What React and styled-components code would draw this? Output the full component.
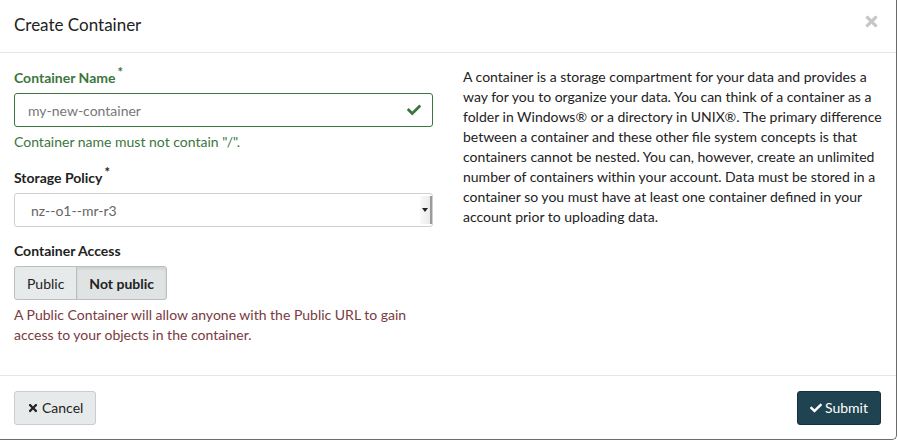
import React, { useState } from 'react'
import styled, { createGlobalStyle } from 'styled-components'
import { FaCheck, FaTimes } from 'react-icons/fa'

const Global = createGlobalStyle`
  html, body {
    margin: 0;
    padding: 0;
    background: #fff;
  }
  body {
    font-family: Lato, "Open Sans", "Liberation Sans", sans-serif;
    font-size: 14px;
    color: #222;
  }
`

const Modal = styled.div`
  width: 897px;
  height: 440px;
  box-sizing: border-box;
  border-right: 1px solid #6d6d6d;
  border-bottom: 1px solid #6d6d6d;
  border-bottom-right-radius: 5px;
  display: flex;
  flex-direction: column;
  background: #fff;
`

const Header = styled.div`
  height: 53px;
  box-sizing: border-box;
  padding: 0 16px 0 14px;
  border-bottom: 1px solid #e5e5e5;
  display: flex;
  align-items: center;
  justify-content: space-between;
`

const Title = styled.h4`
  margin: 0;
  font-size: 17px;
  font-weight: 400;
  color: #222;
  position: relative;
  top: -2px;
`

const Close = styled.button`
  border: none;
  background: none;
  padding: 0;
  color: #c6c6c6;
  font-size: 17px;
  display: flex;
  position: relative;
  top: -5px;
  cursor: pointer;
`

const Body = styled.div`
  flex: 1;
  display: grid;
  grid-template-columns: 419px 1fr;
  column-gap: 30px;
  padding: 15px 14px 0 14px;
  border-bottom: 1px solid #e5e5e5;
`

const Column = styled.div`
  display: flex;
  flex-direction: column;
`

const Group = styled.div`
  margin-bottom: ${p => p.$mb || 15}px;
`

const Label = styled.label`
  display: block;
  font-weight: 700;
  font-size: 14px;
  line-height: 20px;
  margin-bottom: 5px;
  color: ${p => (p.$ok ? '#3c763d' : '#222')};
`

const Star = styled.span`
  display: inline-block;
  font-size: 13px;
  line-height: 1;
  vertical-align: top;
  margin-left: 2px;
  margin-top: -2px;
`

const InputWrap = styled.div`
  height: 34px;
  box-sizing: border-box;
  border: 1px solid #3c763d;
  border-radius: 3px;
  display: flex;
  align-items: center;
  justify-content: space-between;
  padding: 0 11px 0 13px;
  color: #3c763d;
  font-size: 14px;
`

const Input = styled.input`
  border: none;
  outline: none;
  font-family: inherit;
  font-size: 14px;
  color: #777;
  padding: 0;
  flex: 1;
`

const Help = styled.p`
  margin: 5px 0 0;
  line-height: 20px;
  font-size: 14px;
  color: ${p => p.$color};
`

const Select = styled.div`
  height: 34px;
  box-sizing: border-box;
  border: 1px solid #cfcfcf;
  border-radius: 3px;
  display: flex;
  align-items: stretch;
  color: #666;
`

const SelectText = styled.div`
  flex: 1;
  display: flex;
  align-items: center;
  padding-left: 16px;
`

const SelectArrow = styled.div`
  width: 10px;
  margin: 2px 0;
  background: linear-gradient(to right, #fafafa, #eaeaea);
  border-right: 2px solid #9a9a9a;
  display: flex;
  align-items: center;
  justify-content: center;
  &::after {
    content: '';
    border-left: 3px solid transparent;
    border-right: 3px solid transparent;
    border-top: 4px solid #222;
  }
`

const Toggle = styled.div`
  display: inline-flex;
`

const ToggleButton = styled.button`
  height: 34px;
  box-sizing: border-box;
  font-family: inherit;
  font-size: 14px;
  padding: 0 12px;
  border: 1px solid #bdbdbd;
  color: #222;
  font-weight: ${p => (p.$active ? 700 : 400)};
  background: ${p => (p.$active ? '#dfe3e4' : '#e7eaeb')};
  box-shadow: ${p => (p.$active ? 'inset 0 2px 3px rgba(0,0,0,0.08)' : 'none')};
  cursor: pointer;
  &:first-child {
    border-radius: 3px 0 0 3px;
  }
  &:last-child {
    border-radius: 0 3px 3px 0;
    margin-left: -1px;
  }
`

const Info = styled.p`
  margin: -1px 0 0;
  font-size: 14px;
  line-height: 20px;
  color: #222;
`

const Footer = styled.div`
  flex: 0 0 63px;
  display: flex;
  align-items: center;
  justify-content: space-between;
  padding: 0 15px 0 14px;
`

const Button = styled.button`
  height: 34px;
  box-sizing: border-box;
  font-family: inherit;
  font-size: 14px;
  border-radius: 3px;
  padding: 0 12px;
  display: flex;
  align-items: center;
  gap: 3px;
  cursor: pointer;
  border: 1px solid ${p => (p.$primary ? '#17323c' : '#c9cdcf')};
  background: ${p => (p.$primary ? '#1f4350' : '#e7eaeb')};
  color: ${p => (p.$primary ? '#fff' : '#222')};
  svg {
    font-size: 12px;
  }
`

export default function App() {
  const [access, setAccess] = useState('private')

  return (
    <>
      <Global />
      <Modal>
        <Header>
          <Title>Create Container</Title>
          <Close aria-label="Close"><FaTimes /></Close>
        </Header>
        <Body>
          <Column>
            <Group $mb={16}>
              <Label $ok>Container Name<Star>*</Star></Label>
              <InputWrap>
                <Input defaultValue="my-new-container" />
                <FaCheck />
              </InputWrap>
              <Help $color="#3c763d">Container name must not contain "/".</Help>
            </Group>
            <Group $mb={14}>
              <Label>Storage Policy<Star>*</Star></Label>
              <Select>
                <SelectText>nz--o1--mr-r3</SelectText>
                <SelectArrow />
              </Select>
            </Group>
            <Group>
              <Label>Container Access</Label>
              <Toggle>
                <ToggleButton $active={access === 'public'} onClick={() => setAccess('public')}>Public</ToggleButton>
                <ToggleButton $active={access === 'private'} onClick={() => setAccess('private')}>Not public</ToggleButton>
              </Toggle>
              <Help $color="#7a3a3e">
                A Public Container will allow anyone with the Public URL to gain access to your objects in the container.
              </Help>
            </Group>
          </Column>
          <Column>
            <Info>
              A container is a storage compartment for your data and provides a way for you to organize your data. You can think of a container as a folder in Windows® or a directory in UNIX®. The primary difference between a container and these other file system concepts is that containers cannot be nested. You can, however, create an unlimited number of containers within your account. Data must be stored in a container so you must have at least one container defined in your account prior to uploading data.
            </Info>
          </Column>
        </Body>
        <Footer>
          <Button><FaTimes />Cancel</Button>
          <Button $primary><FaCheck />Submit</Button>
        </Footer>
      </Modal>
    </>
  )
}
